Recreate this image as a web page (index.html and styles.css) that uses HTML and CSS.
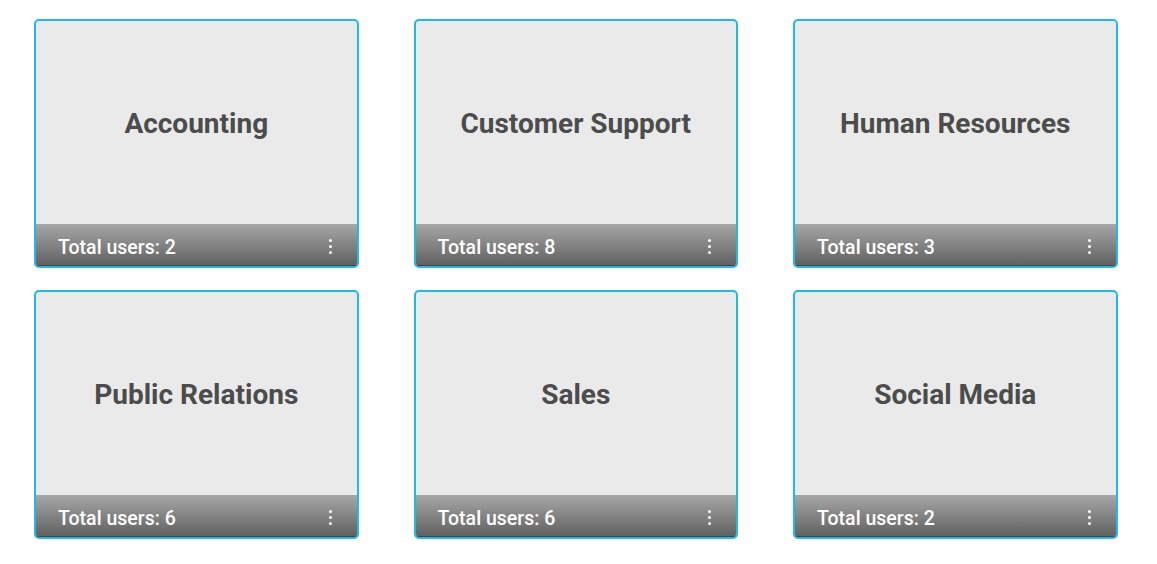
FILE: index.html
```html
<!DOCTYPE html>
<html>
<head>
<meta charset="utf-8">
<link rel="stylesheet" href="styles.css">
</head>
<body>
<div class="grid">
  <div class="card"><div class="card-body"><span class="title">Accounting</span></div><div class="card-foot"><span class="count">Total users: 2</span><span class="dots"><i></i><i></i><i></i></span></div></div>
  <div class="card"><div class="card-body"><span class="title">Customer Support</span></div><div class="card-foot"><span class="count">Total users: 8</span><span class="dots"><i></i><i></i><i></i></span></div></div>
  <div class="card"><div class="card-body"><span class="title">Human Resources</span></div><div class="card-foot"><span class="count">Total users: 3</span><span class="dots"><i></i><i></i><i></i></span></div></div>
  <div class="card"><div class="card-body"><span class="title">Public Relations</span></div><div class="card-foot"><span class="count">Total users: 6</span><span class="dots"><i></i><i></i><i></i></span></div></div>
  <div class="card"><div class="card-body"><span class="title">Sales</span></div><div class="card-foot"><span class="count">Total users: 6</span><span class="dots"><i></i><i></i><i></i></span></div></div>
  <div class="card"><div class="card-body"><span class="title">Social Media</span></div><div class="card-foot"><span class="count">Total users: 2</span><span class="dots"><i></i><i></i><i></i></span></div></div>
</div>
</body>
</html>
```
FILE: styles.css
```css
html, body {
  margin: 0;
  padding: 0;
  background: #ffffff;
  font-family: Roboto, "Liberation Sans", Arial, sans-serif;
}
.grid {
  display: grid;
  grid-template-columns: repeat(3, 324.5px);
  column-gap: 55px;
  row-gap: 22px;
  padding: 19px 0 0 34px;
}
.card {
  height: 249px;
  box-sizing: border-box;
  border: 2px solid #22b9e8;
  border-radius: 5px;
  background: #eaeaea;
  display: flex;
  flex-direction: column;
  overflow: hidden;
}
.card-body {
  flex: 1;
  display: flex;
  align-items: center;
  justify-content: center;
  padding-top: 2px;
}
.title {
  font-size: 28px;
  font-weight: 700;
  color: #4c4c4c;
}
.card-foot {
  height: 42px;
  display: flex;
  align-items: center;
  justify-content: space-between;
  padding: 0 22px 0 22px;
  background: linear-gradient(#a7a7a7, #5f5f5f);
  box-shadow: inset 0 -1px 0 #444;
}
.count {
  color: #ffffff;
  font-size: 19.5px;
  font-weight: 500;
  padding-top: 5px;
}
.dots {
  display: flex;
  flex-direction: column;
  gap: 3px;
  padding-top: 2px;
  margin-right: 3px;
}
.dots i {
  display: block;
  width: 3px;
  height: 3px;
  border-radius: 50%;
  background: #ffffff;
}
```
